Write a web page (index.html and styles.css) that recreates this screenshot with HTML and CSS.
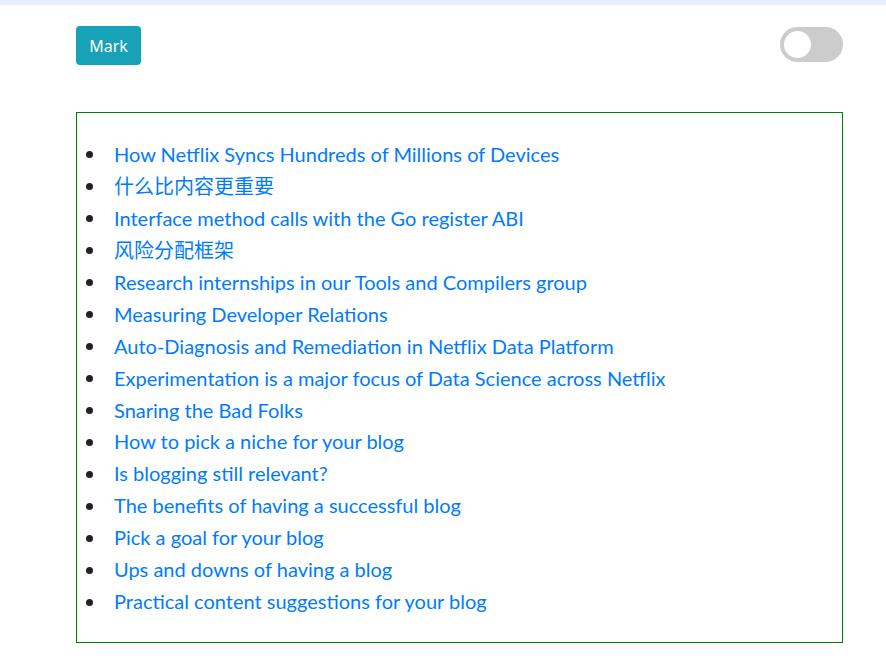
FILE: index.html
```html
<!DOCTYPE html>
<html lang="en">
<head>
<meta charset="utf-8">
<title>Mark</title>
<link rel="stylesheet" href="styles.css">
</head>
<body>
<div class="topbar"></div>
<main class="page">
  <div class="toolbar">
    <button class="btn-mark" type="button">Mark</button>
    <label class="switch"><span class="knob"></span></label>
  </div>
  <div class="box">
    <ul class="list">
      <li><a href="#">How Netflix Syncs Hundreds of Millions of Devices</a></li>
      <li><a href="#">什么比内容更重要</a></li>
      <li><a href="#">Interface method calls with the Go register ABI</a></li>
      <li><a href="#">风险分配框架</a></li>
      <li><a href="#">Research internships in our Tools and Compilers group</a></li>
      <li><a href="#">Measuring Developer Relations</a></li>
      <li><a href="#">Auto-Diagnosis and Remediation in Netflix Data Platform</a></li>
      <li><a href="#">Experimentation is a major focus of Data Science across Netflix</a></li>
      <li><a href="#">Snaring the Bad Folks</a></li>
      <li><a href="#">How to pick a niche for your blog</a></li>
      <li><a href="#">Is blogging still relevant?</a></li>
      <li><a href="#">The benefits of having a successful blog</a></li>
      <li><a href="#">Pick a goal for your blog</a></li>
      <li><a href="#">Ups and downs of having a blog</a></li>
      <li><a href="#">Practical content suggestions for your blog</a></li>
    </ul>
  </div>
</main>
</body>
</html>
```
FILE: styles.css
```css
html, body {
  margin: 0;
  padding: 0;
  background: #fff;
  font-family: "Lato", "Noto Sans CJK SC", sans-serif;
}
.topbar {
  height: 5px;
  background: #e3f0fc;
}
.page {
  margin-left: 76px;
  width: 767px;
}
.toolbar {
  display: flex;
  justify-content: space-between;
  align-items: flex-start;
  padding-top: 21px;
}
.btn-mark {
  width: 65px;
  height: 39px;
  border: none;
  border-radius: 4px;
  background: #17a2b8;
  color: #fff;
  font-family: "Noto Sans", sans-serif;
  font-size: 16px;
  padding: 0;
  cursor: pointer;
}
.switch {
  position: relative;
  display: block;
  width: 63px;
  height: 35px;
  border-radius: 18px;
  background: #ccc;
  margin-top: 1px;
}
.knob {
  position: absolute;
  left: 4px;
  top: 4px;
  width: 27px;
  height: 27px;
  border-radius: 50%;
  background: #fff;
}
.box {
  margin-top: 47px;
  border: 1px solid #008000;
  height: 529px;
}
.list {
  margin: 26px 0 0 0;
  padding-left: 36px;
  list-style: none;
  font-size: 20px;
  line-height: 31.93px;
}
.list li {
  display: flex;
  align-items: center;
}
.list li::before {
  content: "";
  flex: none;
  width: 7px;
  height: 7px;
  border-radius: 50%;
  background: #222;
  margin-left: -27px;
  margin-right: 21px;
}
.list a {
  color: #007bff;
  text-decoration: none;
}
```
